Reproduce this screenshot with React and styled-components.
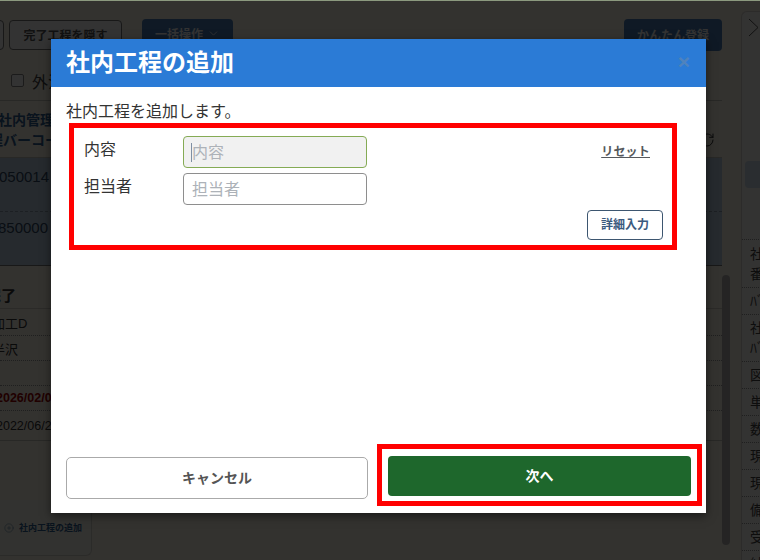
import React from 'react';
import styled, { createGlobalStyle } from 'styled-components';
import { ChevronDown, CirclePlus, RotateCw } from 'lucide-react';

const GlobalStyle = createGlobalStyle`
  html, body {
    margin: 0;
    padding: 0;
    background: #fff;
  }
  * {
    box-sizing: border-box;
  }
`;

const Page = styled.div`
  position: relative;
  display: flex;
  width: 760px;
  height: 560px;
  overflow: hidden;
  background: #fef8ec;
  color: #111;
  font-family: "Liberation Sans", "Noto Sans CJK JP", sans-serif;
`;

const Main = styled.main`
  display: flex;
  flex-direction: column;
  flex: none;
  width: 722px;
`;

const Toolbar = styled.div`
  display: flex;
  align-items: flex-start;
  height: 51px;
  padding-top: 19px;
`;

const OutlineButton = styled.button`
  flex: none;
  height: 30px;
  margin-top: 1px;
  margin-left: ${(p) => p.$left || 0}px;
  width: ${(p) => p.$width}px;
  padding: 0 0 2px;
  border: 1px solid #777;
  border-radius: 4px;
  background: #fff;
  color: #555;
  font: bold 12px "Liberation Sans", "Noto Sans CJK JP", sans-serif;
`;

const SolidButton = styled.button`
  display: flex;
  align-items: center;
  justify-content: center;
  gap: 4px;
  flex: none;
  height: ${(p) => p.$height}px;
  margin-left: ${(p) => p.$left}px;
  width: ${(p) => p.$width}px;
  padding: 0 0 2px;
  border: 0;
  border-radius: 4px;
  background: #4a7eb8;
  color: #fff;
  font: bold 12px "Liberation Sans", "Noto Sans CJK JP", sans-serif;
`;

const FilterRow = styled.label`
  display: flex;
  align-items: center;
  gap: 8px;
  height: 50px;
  padding: 10px 0 0 11px;
  font-size: 16px;
  border-bottom: 1px solid #c9c5be;
  color: #444;
`;

const CheckBox = styled.span`
  width: 13px;
  height: 13px;
  border: 1px solid #888;
  border-radius: 2px;
  background: #fff;
`;

const TableHead = styled.div`
  display: flex;
  align-items: center;
  justify-content: space-between;
  height: 57px;
  padding: 2px 7px 0 0;
  border-bottom: 1px solid #c9c5be;
  color: #2f5f92;
  font-size: 14px;
  font-weight: bold;
  line-height: 20px;
  white-space: nowrap;
`;

const RefreshIcon = styled(RotateCw)`
  margin-top: 20px;
`;

const Shifted = styled.div`
  margin-left: ${(p) => p.$shift}px;
  white-space: nowrap;
`;

const CodeRow = styled.div`
  height: 54px;
  padding-top: ${(p) => p.$top}px;
  background: #bfd3e6;
  border-bottom: 1px ${(p) => (p.$last ? 'solid #777' : 'dashed #8b9cad')};
  color: #2f4763;
  font-size: 15px;
  line-height: 20px;
`;

const DetailTitle = styled.div`
  display: flex;
  align-items: center;
  height: 43px;
  padding-top: 14px;
  border-bottom: 1px solid #d4d0c8;
  color: #333;
  font-size: 15px;
  font-weight: bold;
`;

const DetailRow = styled.div`
  display: flex;
  align-items: center;
  height: ${(p) => p.$height}px;
  border-bottom: 1px ${(p) => (p.$solid ? 'solid #c9c5be' : 'dotted #999')};
  color: ${(p) => (p.$alert ? '#a00000' : '#333')};
  font-size: ${(p) => (p.$date ? 12.5 : 13)}px;
  font-weight: ${(p) => (p.$alert ? 'bold' : 'normal')};
`;

const AddCard = styled.div`
  display: flex;
  align-items: center;
  gap: 5px;
  width: 92px;
  height: 56px;
  margin-top: 59px;
  padding: 0 0 0 4px;
  border: 1px solid #d8d4cc;
  border-top: 0;
  border-left: 0;
  border-radius: 0 0 6px 0;
  background: #fafaef;
  color: #2f5f92;
  font-size: 9px;
  font-weight: bold;
  white-space: nowrap;
`;

const ScrollTrack = styled.div`
  flex: none;
  width: 8px;
  height: 270px;
  margin-top: 275px;
  border-radius: 4px;
  background: #b8b6b4;
`;

const Side = styled.aside`
  flex: none;
  width: 30px;
  height: 560px;
  margin: 11px 0 0 11px;
  border: 1px solid #dbd7d0;
  border-right: 0;
  border-radius: 6px 0 0 0;
  background: #fefcf8;
  overflow: hidden;
`;

const SideToggle = styled.div`
  height: 149px;
  padding: 6px 0 0 6px;
`;

const SideBlue = styled.div`
  height: 27px;
  margin-left: 3px;
  margin-bottom: 51px;
  border-radius: 4px 0 0 4px;
  background: #cfe0ef;
`;

const SideRow = styled.div`
  display: flex;
  align-items: center;
  height: ${(p) => p.$height || 27}px;
  padding-left: 8px;
  border-top: 1px dotted #999;
  color: #444;
  font-size: 14px;
  line-height: 20px;
  white-space: pre;
`;

const Backdrop = styled.div`
  position: absolute;
  inset: 0;
  display: flex;
  align-items: flex-start;
  padding: 38px 0 0 51px;
  border-top: 1px solid #8c9a7f;
  background: rgba(0, 0, 0, 0.8);
`;

const Modal = styled.section`
  display: flex;
  flex-direction: column;
  width: 655px;
  height: 474px;
  background: #fff;
  box-shadow: 0 3px 9px rgba(0, 0, 0, 0.5);
`;

const ModalHeader = styled.header`
  display: flex;
  align-items: center;
  justify-content: space-between;
  flex: none;
  height: 48px;
  padding: 0 15px;
  background: #2b7bd6;
`;

const ModalTitle = styled.h2`
  margin: 0;
  color: #fff;
  font-size: 24px;
  font-weight: bold;
  line-height: 48px;
`;

const CloseButton = styled.button`
  padding: 0 1px 3px 0;
  border: 0;
  background: none;
  color: #4f83bd;
  font: bold 21px "Liberation Sans", sans-serif;
  line-height: 21px;
`;

const ModalBody = styled.div`
  display: flex;
  flex-direction: column;
  flex: 1;
  padding: 13px 4px 7px 15px;
`;

const Intro = styled.p`
  margin: 0;
  height: 23px;
  color: #333;
  font-size: 16px;
  line-height: 23px;
`;

const Highlight = styled.div`
  border: 5px solid #ff0000;
  background: #fff;
`;

const FormBox = styled(Highlight)`
  width: 608px;
  height: 127px;
  margin-left: 3px;
  padding: 8px 9px 0 10px;
`;

const FormRow = styled.div`
  display: grid;
  grid-template-columns: 99px 184px 1fr;
  align-items: center;
  height: 32px;
  margin-bottom: 5px;
`;

const FieldLabel = styled.label`
  padding-bottom: 4px;
  color: #333;
  font-size: 16px;
  line-height: 24px;
`;

const TextField = styled.input`
  width: 184px;
  height: 32px;
  padding: 1px 8px 0;
  border: 1px solid ${(p) => (p.$active ? '#85ab55' : '#8e8e8e')};
  border-radius: 4px;
  background: ${(p) =>
    p.$active
      ? 'linear-gradient(#7f8fa3, #7f8fa3) 7px 6px / 1px 19px no-repeat #f1f1f1'
      : '#fff'};
  font: 16px "Liberation Sans", "Noto Sans CJK JP", sans-serif;

  &::placeholder {
    color: #adb2b8;
    opacity: 1;
  }
`;

const ResetLink = styled.a`
  justify-self: end;
  margin: 0 13px 3px 0;
  color: #55585c;
  font-size: 12px;
  font-weight: bold;
  letter-spacing: 0.2px;
  text-decoration: underline;
`;

const DetailBar = styled.div`
  display: flex;
  justify-content: flex-end;
`;

const DetailButton = styled.button`
  width: 76px;
  height: 30px;
  padding: 0 0 3px;
  border: 1px solid #3d5670;
  border-radius: 4px;
  background: #fff;
  color: #3b5a7e;
  font: bold 12px "Liberation Sans", "Noto Sans CJK JP", sans-serif;
`;

const ModalFooter = styled.footer`
  display: flex;
  align-items: flex-start;
  gap: 9px;
  margin-top: auto;
`;

const CancelButton = styled.button`
  flex: none;
  width: 302px;
  height: 42px;
  margin-top: 13px;
  padding: 0 0 3px;
  border: 1px solid #aaa;
  border-radius: 5px;
  background: #fff;
  color: #555;
  font: bold 14px "Liberation Sans", "Noto Sans CJK JP", sans-serif;
`;

const NextBox = styled(Highlight)`
  flex: none;
  width: 325px;
  height: 62px;
  padding: 7px 6px 0;
`;

const NextButton = styled.button`
  display: block;
  width: 100%;
  height: 40px;
  padding: 0 0 2px;
  border: 0;
  border-radius: 4px;
  background: #1e672c;
  color: #fff;
  font: bold 14px "Liberation Sans", "Noto Sans CJK JP", sans-serif;
`;

const sideRows = [
  { text: '社内工程\n番号', height: 48 },
  { text: 'ﾊﾞｰｺｰﾄﾞ' },
  { text: '社内工程\nﾊﾞｰｺｰﾄﾞ', height: 47 },
  { text: '図番' },
  { text: '単価' },
  { text: '数量' },
  { text: '現品票' },
  { text: '現在地' },
  { text: '備考' },
  { text: '受注日' },
  { text: '納期' },
];

export default function App() {
  return (
    <>
      <GlobalStyle />
      <Page>
        <Main>
          <Toolbar>
            <OutlineButton $left={-60} $width={64}>
              工程表示
            </OutlineButton>
            <OutlineButton $left={5} $width={113}>
              完了工程を隠す
            </OutlineButton>
            <SolidButton $left={20} $width={91} $height={31}>
              一括操作 <ChevronDown size={13} strokeWidth={1.5} />
            </SolidButton>
            <SolidButton $left={391} $width={98} $height={32}>
              かんたん登録
            </SolidButton>
          </Toolbar>
          <FilterRow>
            <CheckBox />
            外注
          </FilterRow>
          <TableHead>
            <div>
              <Shifted $shift={-2}>社内管理</Shifted>
              <Shifted $shift={-25}>工程バーコー</Shifted>
            </div>
            <RefreshIcon size={16} strokeWidth={1.5} color="#333" />
          </TableHead>
          <CodeRow $top={9}>
            <Shifted $shift={-1}>050014</Shifted>
          </CodeRow>
          <CodeRow $top={6} $last>
            <Shifted $shift={-2}>850000</Shifted>
          </CodeRow>
          <DetailTitle>
            <Shifted $shift={-14}>完了</Shifted>
          </DetailTitle>
          <DetailRow $height={27}>
            <Shifted $shift={-8}>加工D</Shifted>
          </DetailRow>
          <DetailRow $height={25}>
            <Shifted $shift={-8}>半沢</Shifted>
          </DetailRow>
          <DetailRow $height={25} />
          <DetailRow $height={25} $date $alert>
            <Shifted $shift={-4}>2026/02/0</Shifted>
          </DetailRow>
          <DetailRow $height={30} $date $solid>
            <Shifted $shift={-4}>2022/06/2</Shifted>
          </DetailRow>
          <AddCard>
            <CirclePlus size={10} strokeWidth={1} />
            社内工程の追加
          </AddCard>
        </Main>
        <ScrollTrack />
        <Side>
          <SideToggle>
            <svg width="11" height="19" viewBox="0 0 11 19" fill="none">
              <polyline points="1,1 10,9.5 1,18" stroke="#555" strokeWidth="1" />
            </svg>
          </SideToggle>
          <SideBlue />
          {sideRows.map((row) => (
            <SideRow key={row.text} $height={row.height}>
              {row.text}
            </SideRow>
          ))}
        </Side>
        <Backdrop>
          <Modal>
            <ModalHeader>
              <ModalTitle>社内工程の追加</ModalTitle>
              <CloseButton>×</CloseButton>
            </ModalHeader>
            <ModalBody>
              <Intro>社内工程を追加します。</Intro>
              <FormBox>
                <FormRow>
                  <FieldLabel>内容</FieldLabel>
                  <TextField $active placeholder="内容" />
                  <ResetLink>リセット</ResetLink>
                </FormRow>
                <FormRow>
                  <FieldLabel>担当者</FieldLabel>
                  <TextField placeholder="担当者" />
                </FormRow>
                <DetailBar>
                  <DetailButton>詳細入力</DetailButton>
                </DetailBar>
              </FormBox>
              <ModalFooter>
                <CancelButton>キャンセル</CancelButton>
                <NextBox>
                  <NextButton>次へ</NextButton>
                </NextBox>
              </ModalFooter>
            </ModalBody>
          </Modal>
        </Backdrop>
      </Page>
    </>
  );
}
